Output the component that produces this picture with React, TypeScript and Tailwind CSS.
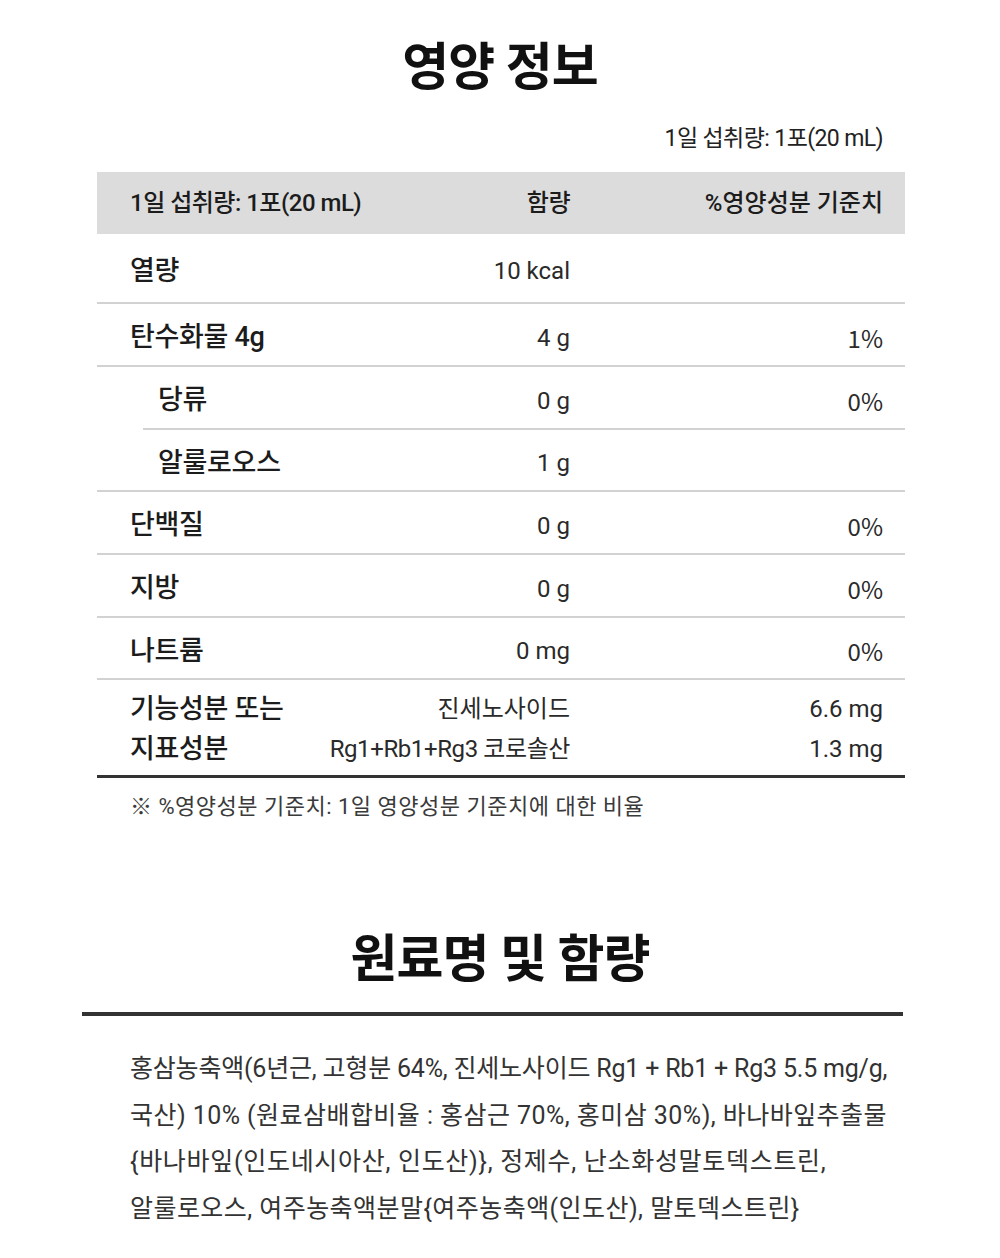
import React from 'react';

const font = { fontFamily: 'Roboto, "Noto Sans CJK KR", sans-serif' };
const notoFont = { fontFamily: '"Noto Sans CJK KR", sans-serif' };

type Row = {
  label: string;
  amount: string;
  percent?: string;
  sub?: boolean;
  h: string;
  indentLine?: boolean;
};

const rows: Row[] = [
  { label: '열량', amount: '10 kcal', h: 'h-[68px]' },
  { label: '탄수화물 4g', amount: '4 g', percent: '1%', h: 'h-[61px]' },
  { label: '당류', amount: '0 g', percent: '0%', sub: true, h: 'h-[61px]', indentLine: true },
  { label: '알룰로오스', amount: '1 g', sub: true, h: 'h-[60px]' },
  { label: '단백질', amount: '0 g', percent: '0%', h: 'h-[61px]' },
  { label: '지방', amount: '0 g', percent: '0%', h: 'h-[61px]' },
  { label: '나트륨', amount: '0 mg', percent: '0%', h: 'h-[60px]' },
];

const NutritionRow = ({ row }: { row: Row }) => (
  <div>
    <div className={`grid grid-cols-[300px_173px_1fr] items-center pt-[6px] ${row.h}`}>
      <span className={`${row.sub ? 'pl-[61px]' : 'pl-[33px]'} text-[27px] font-medium text-[#1c1c1c] tracking-[-0.3px]`}>
        {row.label}
      </span>
      <span className="text-right text-[24px] text-[#2a2a2a]">{row.amount}</span>
      <span className="text-right pr-[22px] text-[24px] text-[#2a2a2a]" style={notoFont}>
        {row.percent}
      </span>
    </div>
    <div className={`h-[2px] bg-[#d2d2d2] ${row.indentLine ? 'ml-[46px]' : ''}`} />
  </div>
);

export default function App() {
  return (
    <div className="w-[1000px] h-[1258px] bg-white overflow-hidden" style={font}>
      {/* 영양 정보 */}
      <h1 className="pt-[42px] text-center text-[51px] leading-none font-bold text-[#111] tracking-[-1px]">
        영양 정보
      </h1>

      <p className="mt-[34px] pr-[117px] text-right text-[23px] leading-none text-[#222] tracking-[-0.6px]">
        1일 섭취량: 1포(20 mL)
      </p>

      <div className="mt-[22px] w-[808px] ml-[97px]">
        <div className="grid grid-cols-[300px_173px_1fr] items-center h-[62px] bg-[#dcdcdc] text-[24px] font-medium text-[#1c1c1c] tracking-[-0.5px]">
          <span className="pl-[33px] whitespace-nowrap">1일 섭취량: 1포(20 mL)</span>
          <span className="text-right">함량</span>
          <span className="text-right pr-[22px] tracking-[0px]">%영양성분 기준치</span>
        </div>

        {rows.map((r) => (
          <NutritionRow key={r.label} row={r} />
        ))}

        <div className="grid grid-cols-[200px_273px_1fr] pt-[14px] h-[95px] text-[24px]">
          <div className="pl-[33px] flex flex-col gap-[10px] font-medium text-[27px] text-[#1c1c1c] leading-[30px] whitespace-nowrap tracking-[-0.3px]">
            <span>기능성분 또는</span>
            <span>지표성분</span>
          </div>
          <div className="flex flex-col gap-[10px] text-right text-[#2a2a2a] leading-[30px] whitespace-nowrap">
            <span>진세노사이드</span>
            <span className="tracking-[-0.4px]">Rg1+Rb1+Rg3 코로솔산</span>
          </div>
          <div className="flex flex-col gap-[10px] text-right pr-[22px] text-[#2a2a2a] leading-[30px]">
            <span>6.6 mg</span>
            <span>1.3 mg</span>
          </div>
        </div>
        <div className="h-[3px] bg-[#333]" />
      </div>

      <p className="mt-[18px] pl-[130px] text-[22px] leading-none text-[#3a3a3a] tracking-[0.5px]">
        ※ %영양성분 기준치: 1일 영양성분 기준치에 대한 비율
      </p>

      {/* 원료명 및 함량 */}
      <h2 className="mt-[116px] text-center text-[51px] leading-none font-bold text-[#111] tracking-[-1px]">
        원료명 및 함량
      </h2>

      <div className="mt-[27px] ml-[82px] w-[821px] h-[4px] bg-[#333]" />

      <div className="mt-[30px] pl-[130px] text-[25px] leading-[46.5px] text-[#333]">
        <p className="whitespace-nowrap tracking-[-0.2px]">홍삼농축액(6년근, 고형분 64%, 진세노사이드 Rg1 + Rb1 + Rg3 5.5 mg/g,</p>
        <p className="whitespace-nowrap tracking-[0.45px]">국산) 10% (원료삼배합비율 : 홍삼근 70%, 홍미삼 30%), 바나바잎추출물</p>
        <p className="whitespace-nowrap tracking-[0.7px]">{'{'}바나바잎(인도네시아산, 인도산){'}'}, 정제수, 난소화성말토덱스트린,</p>
        <p className="whitespace-nowrap tracking-[0.45px]">알룰로오스, 여주농축액분말{'{'}여주농축액(인도산), 말토덱스트린{'}'}</p>
      </div>
    </div>
  );
}
